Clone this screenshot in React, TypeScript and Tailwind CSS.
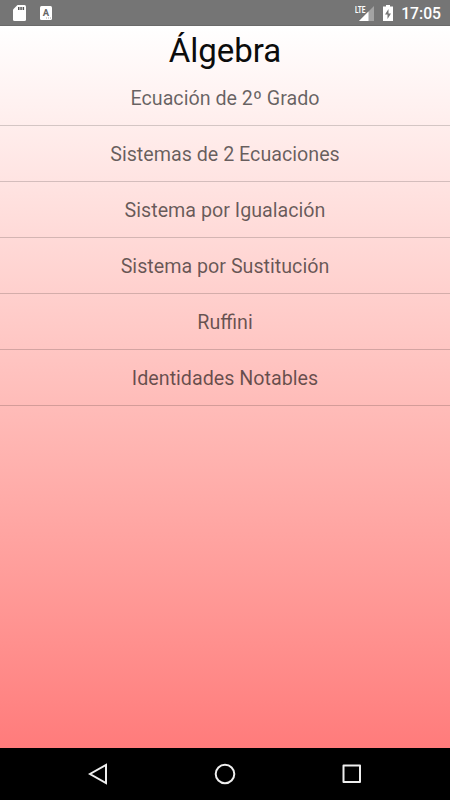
const items = [
  "Ecuación de 2º Grado",
  "Sistemas de 2 Ecuaciones",
  "Sistema por Igualación",
  "Sistema por Sustitución",
  "Ruffini",
  "Identidades Notables",
];

function StatusBar() {
  return (
    <header className="flex h-[26px] shrink-0 items-center justify-between border-b border-[#6a6a6a] bg-[#757575] pr-[9px] pl-[13px] text-white">
      <div className="flex items-center gap-[14px]">
        <svg width="13" height="16" viewBox="0 0 13 16" fill="currentColor">
          <path d="M4.500 0h7Q13 0 13 1.500v13Q13 16 11.500 16h-10Q0 16 0 14.500V4.500z" />
          <path d="M5 2h1.500v3H5zM7.300 2h1.500v3H7.300zM9.600 2h1.500v3H9.600z" fill="#555" />
        </svg>
        <svg width="12" height="14" viewBox="0 0 12 14">
          <rect width="12" height="14" rx="1.500" fill="white" />
          <text x="6" y="10.300" textAnchor="middle" fontSize="9.500" fontWeight="700" fill="#666">A</text>
          <path d="M6 11.500h1v1H6zM8 11.500h1v1H8zM10 11.500h1v1h-1z" fill="#aaa" />
        </svg>
      </div>
      <div className="flex items-center">
        <svg className="mr-[9px]" width="19" height="18" viewBox="0 0 19 18">
          <path d="M19 2v15H4z" fill="#a3a3a3" />
          <path d="M13.500 7.500V17H4z" fill="white" />
          <path d="M0 1h11v8H0z" fill="#757575" />
          <text x="0" y="8.500" fontSize="9" fontWeight="700" textLength="10.500" lengthAdjust="spacingAndGlyphs" fill="white">LTE</text>
        </svg>
        <svg className="mr-[8px]" width="10" height="16" viewBox="0 0 10 16">
          <path fillRule="evenodd" d="M3 0h4v1.500h3V16H0V1.500h3zM5.500 4L2 9.500h2.500V14L8 8.500H5.500z" fill="white" />
        </svg>
        <span className="relative top-px text-[15.700px] leading-5 font-medium">17:05</span>
      </div>
    </header>
  );
}

export default function App() {
  return (
    <div className="flex h-[800px] w-[450px] flex-col overflow-hidden font-['Roboto',sans-serif]">
      <StatusBar />
      <main className="flex-1 bg-linear-to-b from-white to-[#ff7b7b]">
        <h1 className="h-[44px] text-center text-[33px] leading-[50px] text-[#0c0c0c]">Álgebra</h1>
        <ul>
          {items.map((item) => (
            <li key={item} className="flex h-14 items-center justify-center border-b border-black/17 pt-[3px] text-[19.700px] text-black/60">{item}</li>
          ))}
        </ul>
      </main>
      <nav className="flex h-[52px] shrink-0 items-center justify-center gap-[106px] bg-black text-[#eee]">
        <svg width="20" height="22" viewBox="0 0 20 22" fill="none" stroke="currentColor" strokeWidth="2"><path d="M18 2v18L2 11z" /></svg>
        <svg width="22" height="22" viewBox="0 0 22 22" fill="none" stroke="currentColor" strokeWidth="2"><circle cx="11" cy="11" r="9.300" /></svg>
        <svg width="20" height="20" viewBox="0 0 20 20" fill="none" stroke="currentColor" strokeWidth="2" strokeLinejoin="round"><path d="M1.500 1.500h16.500v16.500H1.500z" /></svg>
      </nav>
    </div>
  );
}
